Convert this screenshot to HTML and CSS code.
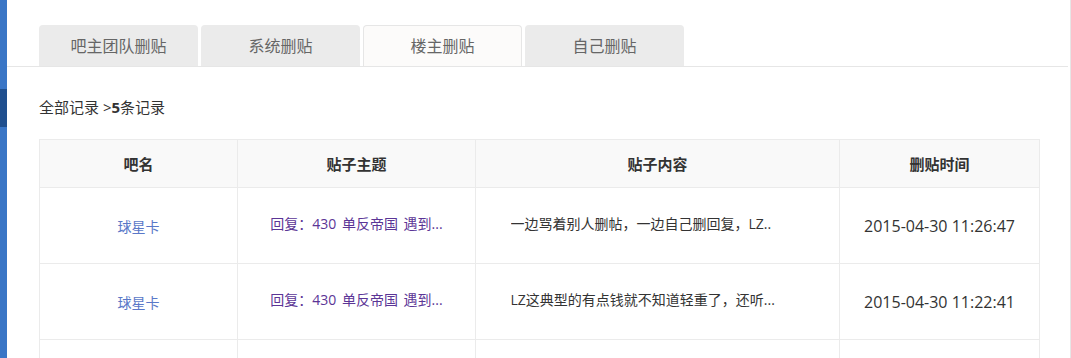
FILE: index.html
```html
<!DOCTYPE html>
<html lang="zh-CN">
<head>
  <meta charset="UTF-8">
  <title>删贴记录</title>
  <link rel="stylesheet" href="styles.css">
</head>
<body>
  <div class="page">
    <!-- 左侧导航条 -->
    <div class="sidebar">
      <div class="sidebar-item"></div>
    </div>

    <div class="main">
      <!-- 选项卡 -->
      <div class="tabs">
        <a class="tab">吧主团队删贴</a>
        <a class="tab">系统删贴</a>
        <a class="tab active">楼主删贴</a>
        <a class="tab">自己删贴</a>
      </div>

      <div class="crumb">全部记录 &gt;<b>5</b>条记录</div>

      <!-- 删贴记录列表 -->
      <table class="records">
        <colgroup>
          <col class="c-name">
          <col class="c-title">
          <col class="c-content">
          <col class="c-time">
        </colgroup>
        <thead>
          <tr>
            <th>吧名</th>
            <th>贴子主题</th>
            <th>贴子内容</th>
            <th>删贴时间</th>
          </tr>
        </thead>
        <tbody>
          <tr>
            <td><a class="forum">球星卡</a></td>
            <td class="up"><a class="title">回复：430 单反帝国 遇到...</a></td>
            <td class="up"><div class="content">一边骂着别人删帖，一边自己删回复，LZ..</div></td>
            <td class="time">2015-04-30 11:26:47</td>
          </tr>
          <tr>
            <td><a class="forum">球星卡</a></td>
            <td class="up"><a class="title">回复：430 单反帝国 遇到...</a></td>
            <td class="up"><div class="content">LZ这典型的有点钱就不知道轻重了，还听...</div></td>
            <td class="time">2015-04-30 11:22:41</td>
          </tr>
          <tr>
            <td></td>
            <td></td>
            <td></td>
            <td></td>
          </tr>
        </tbody>
      </table>
    </div>
  </div>
</body>
</html>
```

FILE: styles.css
```css
* {
  margin: 0;
  padding: 0;
  box-sizing: border-box;
}

body {
  background: #fff;
  font-family: "Open Sans", "Noto Sans CJK SC", sans-serif;
  font-size: 14px;
  color: #333;
  overflow: hidden;
}

.page {
  display: flex;
  height: 358px;
}

/* 左侧导航 */
.sidebar {
  width: 7px;
  flex-shrink: 0;
  background: #3a76c6;
  padding-top: 89px;
}

.sidebar-item {
  height: 38px;
  background: #1f4f8e;
}

.main {
  flex: 1;
  border-right: 1px solid #e6e6e6;
}

/* 选项卡 */
.tabs {
  display: flex;
  gap: 3px;
  padding: 25px 0 0 32px;
  border-bottom: 1px solid #e6e6e6;
  margin-right: 2px;
}

.tab {
  width: 159px;
  height: 41px;
  line-height: 43px;
  text-align: center;
  font-size: 16px;
  color: #666;
  background: #ebebeb;
  border-radius: 4px 4px 0 0;
}

.tab.active {
  background: #fcfbfa;
  border: 1px solid #e6e6e6;
  border-bottom: none;
  line-height: 41px;
}

.crumb {
  margin: 30px 0 22px 32px;
  line-height: 20px;
  font-size: 15px;
  color: #333;
}

/* 表格 */
.records {
  margin-left: 32px;
  width: 1000px;
  table-layout: fixed;
  border-collapse: collapse;
}

.c-name { width: 198px; }
.c-title { width: 238px; }
.c-content { width: 364px; }
.c-time { width: 200px; }

.records th,
.records td {
  border: 1px solid #ebebeb;
  text-align: center;
  white-space: nowrap;
  overflow: hidden;
}

.records th {
  height: 48px;
  background: #f9f9f9;
  font-size: 15px;
  font-weight: bold;
  color: #333;
}

.records td {
  height: 76px;
  font-size: 14px;
  color: #333;
}

.records td.up {
  padding-bottom: 6px;
}

.forum {
  color: #5a78c8;
}

.title {
  color: #5b3596;
  word-spacing: 2px;
}

/* 内容列：定宽居中，文字左对齐 */
.content {
  width: 294px;
  margin: 0 auto;
  text-align: left;
  overflow: hidden;
}

.records td.time {
  font-size: 16px;
}
```
